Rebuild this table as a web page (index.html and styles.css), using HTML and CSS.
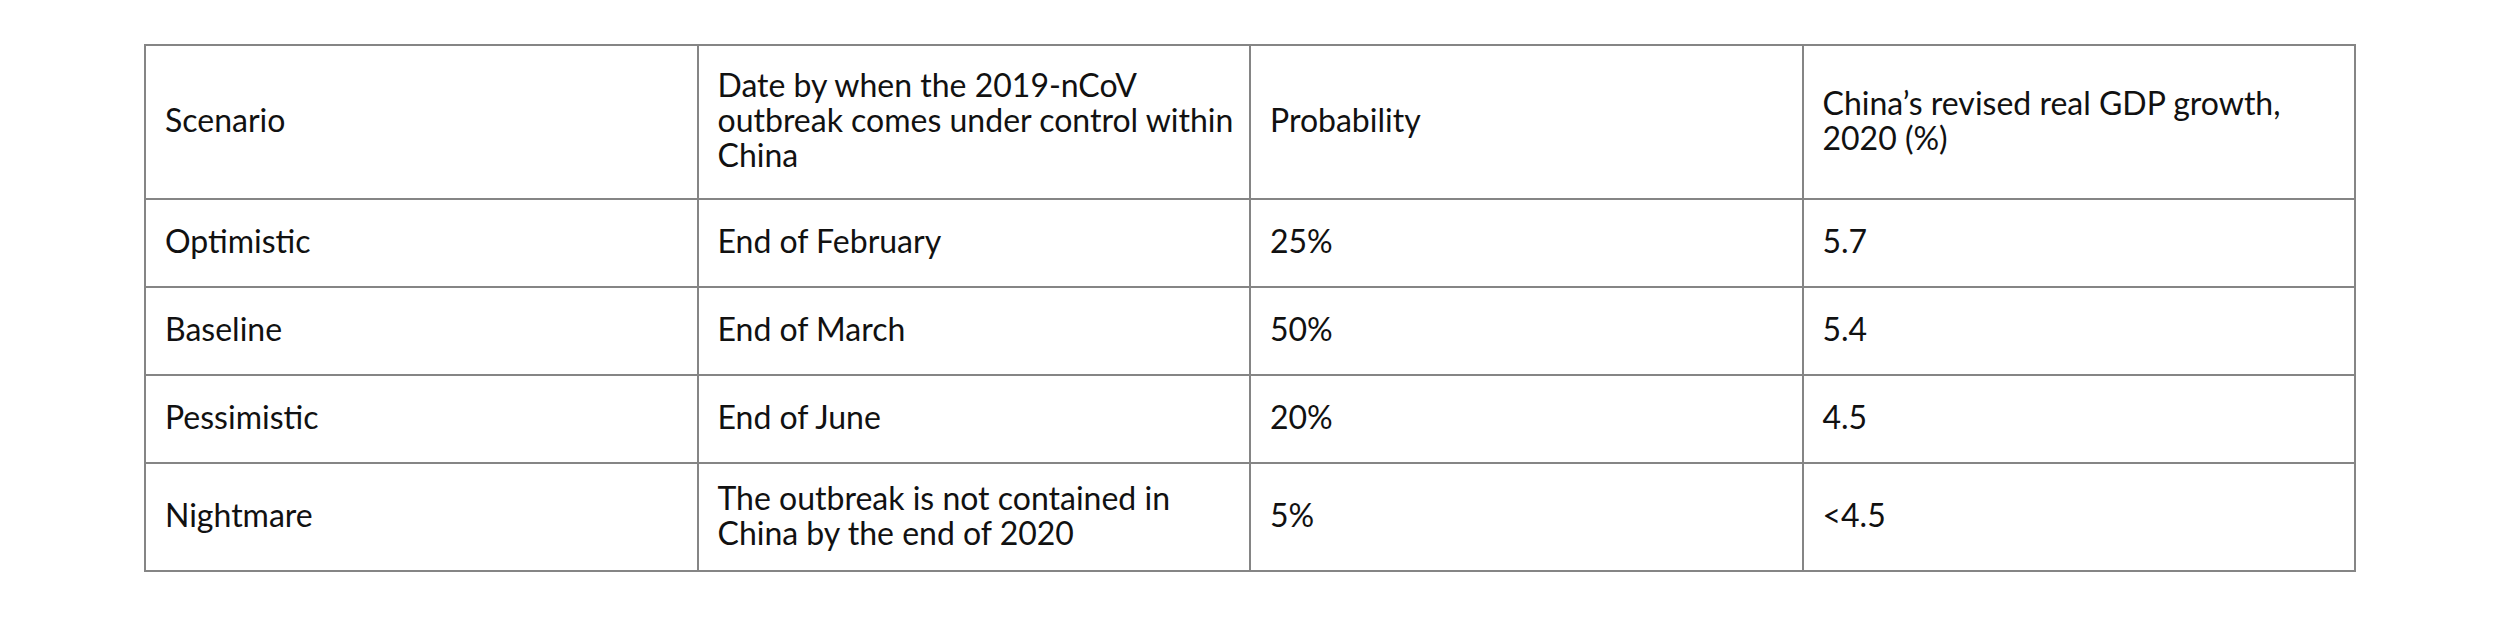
FILE: index.html
```html
<!DOCTYPE html>
<html lang="en">
<head>
<meta charset="utf-8">
<title>2019-nCoV scenarios</title>
<link rel="stylesheet" href="styles.css">
</head>
<body>
<table class="scenarios">
  <colgroup>
    <col class="col"><col class="col"><col class="col"><col class="col">
  </colgroup>
  <tr class="row-head">
    <td>Scenario</td>
    <td>Date by when the 2019-nCoV outbreak comes under control within China</td>
    <td>Probability</td>
    <td>China’s revised real GDP growth, 2020 (%)</td>
  </tr>
  <tr class="row">
    <td>Optimistic</td>
    <td>End of February</td>
    <td>25%</td>
    <td>5.7</td>
  </tr>
  <tr class="row">
    <td>Baseline</td>
    <td>End of March</td>
    <td>50%</td>
    <td>5.4</td>
  </tr>
  <tr class="row">
    <td>Pessimistic</td>
    <td>End of June</td>
    <td>20%</td>
    <td>4.5</td>
  </tr>
  <tr class="row-last">
    <td>Nightmare</td>
    <td>The outbreak is not contained in China by the end of 2020</td>
    <td>5%</td>
    <td>&lt;4.5</td>
  </tr>
</table>
</body>
</html>
```

FILE: styles.css
```css
html, body {
  margin: 0;
  padding: 0;
  background: #ffffff;
}

body {
  font-family: Lato, "Noto Sans", "Liberation Sans", sans-serif;
  color: #111111;
}

.scenarios {
  border-collapse: collapse;
  table-layout: fixed;
  width: 2212px;
  margin: 44px auto 0;
  font-size: 32px;
  line-height: 35px;
}

.scenarios td {
  border: 2px solid #858585;
  padding: 0 2px 5px 19px;
  vertical-align: middle;
  text-align: left;
}

.row-head td {
  height: 147px;
}

.row td {
  height: 81px;
}

.row-last td {
  height: 101px;
}
```
